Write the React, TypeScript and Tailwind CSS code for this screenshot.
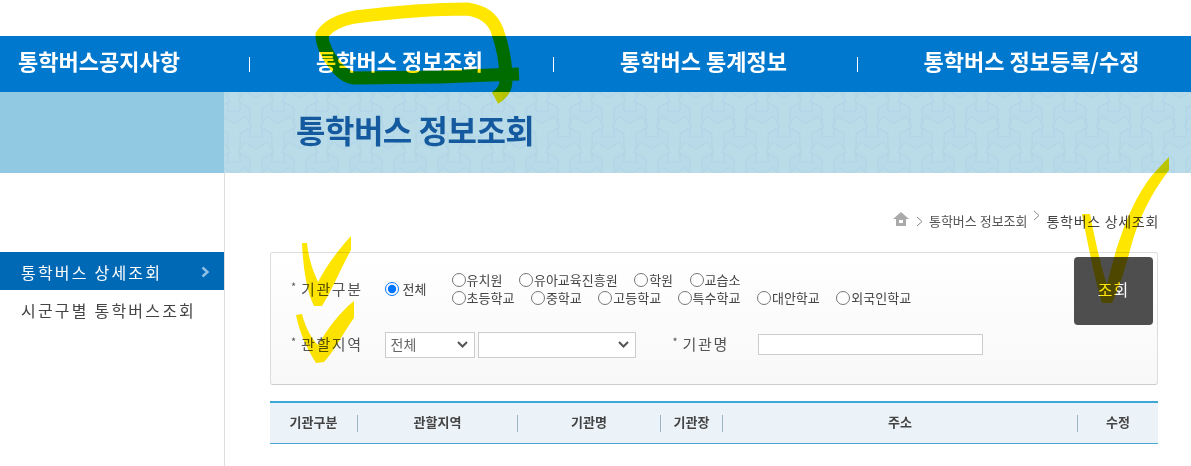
const sans = "font-['Noto_Sans_CJK_KR','Noto_Sans',sans-serif]";

function Radio({ label, checked, gap }: { label: string; checked?: boolean; gap?: string }) {
  return (
    <label className="flex items-center text-[13px] leading-[18px] text-[#444]">
      <input type="radio" name="kind" defaultChecked={checked} className={"w-[14px] h-[14px] m-0 " + (gap ?? "mr-px")} />
      <span>{label}</span>
    </label>
  );
}

function Label({ children, className }: { children: string; className?: string }) {
  return (
    <span className={"relative text-[15px] leading-5 tracking-[1.6px] text-[#555] " + (className ?? "")}>
      <span className="absolute left-[-10px] top-[-3px] text-[11px]">*</span>
      {children}
    </span>
  );
}

function Chevron() {
  return (
    <svg className="absolute right-[7px] top-[10px] pointer-events-none" width="11" height="7" viewBox="0 0 11 7" fill="none" stroke="#555" strokeWidth="2">
      <path d="M1 1 L5.5 5.5 L10 1" />
    </svg>
  );
}

const heads = [
  { t: "기관구분", w: "w-[88px]" },
  { t: "관할지역", w: "w-[160px]" },
  { t: "기관명", w: "w-[143px]" },
  { t: "기관장", w: "w-[62px]" },
  { t: "주소", w: "w-[355px]" },
  { t: "수정", w: "flex-1" },
];

const Y = "-6,3.5 -6,32 6,32 6,3.5 17.7,-3.3 11.7,-13.7 0,-6.9 -11.7,-13.7 -17.7,-3.3";
const yCenters = [
  [0, -30.8],
  [44, -30.8],
  [22, -5.4],
  [0, 20],
  [44, 20],
  [22, 45.4],
];

export default function App() {
  return (
    <div className={"relative w-[1191px] h-[466px] overflow-hidden bg-white " + sans}>
      <div className="h-9" />
      <nav className="h-14 bg-[#0078ce] flex items-center text-white text-[22px] font-bold leading-none">
        <div className="w-[249px] pl-[18px] pb-[8px]">통학버스공지사항</div>
        <div className="w-px h-[15px] bg-white" />
        <div className="w-[303px] text-center pr-1 pb-[8px]">통학버스 정보조회</div>
        <div className="w-px h-[15px] bg-white" />
        <div className="w-[303px] text-center pr-1 pb-[8px]">통학버스 통계정보</div>
        <div className="w-px h-[15px] bg-white" />
        <div className="w-[333px] text-center pb-[8px] pl-[14px]">통학버스 정보등록/수정</div>
      </nav>
      <div className="h-[81px] flex bg-[#90c9e1]">
        <div className="w-[224px]" />
        <div className="relative flex-1 bg-[#b9dbe9] flex items-center pl-[72px] overflow-hidden">
          <svg className="absolute inset-0 w-full h-full" aria-hidden="true">
            <defs>
              <pattern id="yy" width="44" height="50.8" patternUnits="userSpaceOnUse" patternTransform="translate(10 18)">
                {yCenters.map(([x, y]) => (
                  <polygon key={x + "-" + y} points={Y} transform={"translate(" + x + " " + y + ")"} fill="#badce9" stroke="#aed4e5" strokeWidth="1" />
                ))}
              </pattern>
            </defs>
            <rect width="100%" height="100%" fill="url(#yy)" />
          </svg>
          <h1 className="relative text-[32px] font-bold tracking-[-0.5px] leading-none text-[#155a9e] pb-[8px]">통학버스 정보조회</h1>
        </div>
      </div>
      <div className="flex">
        <aside className="w-[225px] h-[293px] border-r border-[#dddddd] pt-[79px] shrink-0">
          <div className="h-[38px] bg-[#0069b5] flex items-center justify-between pl-[21px] pr-[14px] pt-[1px] text-white text-[16px] tracking-[2.2px]">
            <span>통학버스 상세조회</span>
            <svg width="9" height="12" viewBox="0 0 9 12" fill="none" stroke="#8fc0e6" strokeWidth="2.4"><path d="M1.5 1.5 L6.5 6 L1.5 10.5" /></svg>
          </div>
          <div className="h-10 flex items-center pl-[21px] text-[#444] text-[16px] tracking-[2.2px]">시군구별 통학버스조회</div>
        </aside>
        <main className="w-[888px] ml-[45px]">
          <div className="h-[79px] flex items-start justify-end pt-[39px] text-[13px] leading-[18px] text-[#555] whitespace-nowrap">
            <svg className="mr-[7px]" width="16" height="14" viewBox="0 0 16 14" fill="#aaaaaa"><path d="M8 0 L16 7 L13 7 L13 14 L3 14 L3 7 L0 7 Z M6 8 L6 11 L10 11 L10 8 Z" fillRule="evenodd" /></svg>
            <svg className="mr-[6px] mt-[4px]" width="7" height="11" viewBox="0 0 7 11" fill="none" stroke="#888" strokeWidth="1"><path d="M1 1 L6 5.5 L1 10" /></svg>
            <span>통학버스 정보조회</span>
            <svg className="ml-[5px] mr-[7px] mt-[-2px]" width="7" height="11" viewBox="0 0 7 11" fill="none" stroke="#888" strokeWidth="1"><path d="M1 1 L6 5.5 L1 10" /></svg>
            <span className="text-[14px] tracking-[0.7px] text-[#444] mr-[-1px]">통학버스 상세조회</span>
          </div>
          <form className="relative h-[133px] border border-[#dddddd] border-b-[#cccccc] rounded-[3px] bg-gradient-to-b from-white to-[#f8f8f8]">
            <div className="flex items-center absolute left-[30px] top-[18px]">
              <Label className="mr-[22px]">기관구분</Label>
              <Radio label="전체" checked gap="mr-[4px]" />
              <div className="ml-[25px] flex flex-col">
                <div className="flex gap-[16.5px]">
                  <Radio label="유치원" />
                  <Radio label="유아교육진흥원" />
                  <Radio label="학원" />
                  <Radio label="교습소" />
                </div>
                <div className="flex gap-[16.5px]">
                  <Radio label="초등학교" />
                  <Radio label="중학교" />
                  <Radio label="고등학교" />
                  <Radio label="특수학교" />
                  <Radio label="대안학교" />
                  <Radio label="외국인학교" />
                </div>
              </div>
            </div>
            <div className="flex items-center absolute left-[30px] top-[78px]">
              <Label className="mr-[22px]">관할지역</Label>
              <div className="relative w-[90px] h-[26px]">
                <select className="appearance-none w-full h-full bg-white border border-[#cccccc] text-[14px] text-[#666] pl-[5px]"><option>전체</option></select>
                <Chevron />
              </div>
              <div className="relative w-[158px] h-[26px] ml-[3px]">
                <select className="appearance-none w-full h-full bg-white border border-[#cccccc] text-[14px]"><option></option></select>
                <Chevron />
              </div>
              <Label className="ml-[47px] mr-[29px]">기관명</Label>
              <input className="w-[225px] h-[21px] bg-white border border-[#cccccc]" />
            </div>
            <button type="button" className="absolute right-[4px] top-[4px] w-[79px] h-[68px] bg-[#4e4e4e] rounded text-white text-[16px] tracking-[1px] pb-[4px]">조회</button>
          </form>
          <div className="mt-4 h-[43px] border-t-2 border-t-[#3ea7d6] border-b border-b-[#4aa6d4] bg-[#ebf3f8] flex items-center text-[13px] font-bold text-[#444]">
            {heads.map((h, i) => (
              <div key={h.t} className={"h-[17px] pb-[3px] flex items-center justify-center leading-none " + h.w + (i < 5 ? " border-r border-[#9db5c2]" : "")}>{h.t}</div>
            ))}
          </div>
        </main>
      </div>
      <svg className="absolute inset-0 w-full h-full mix-blend-multiply pointer-events-none" aria-hidden="true">
        <path d="M519 74 L440 77 L355 78 Q345 78 335 65 Q322 48 322 35 Q330 22 355 17 Q420 9 467 9 Q490 12 497 30 Q506 55 506 80 Q506 92 495 98" fill="none" stroke="#ffe600" strokeWidth="13" />
        <path d="M302 243 L307 243 C309 262 314 272 318 282 C325 268 338 250 351 236 L351 250 C340 270 332 290 322 306 L314 306 C306 290 303 265 302 243 Z" fill="#ffe600" />
        <path d="M296 315 L302 314 C306 330 313 340 318 345 C328 328 340 312 354 301 L354 318 C345 330 335 350 324 362 L316 363 C308 350 300 335 296 315 Z" fill="#ffe600" />
        <path d="M1082 214 L1090 214 C1096 245 1102 270 1107 285 C1115 250 1130 200 1155 172 L1169 157 L1169 170 C1150 195 1138 220 1130 250 C1125 270 1118 290 1112 303 L1102 303 C1095 280 1088 245 1082 214 Z" fill="#ffe600" />
      </svg>
    </div>
  );
}
